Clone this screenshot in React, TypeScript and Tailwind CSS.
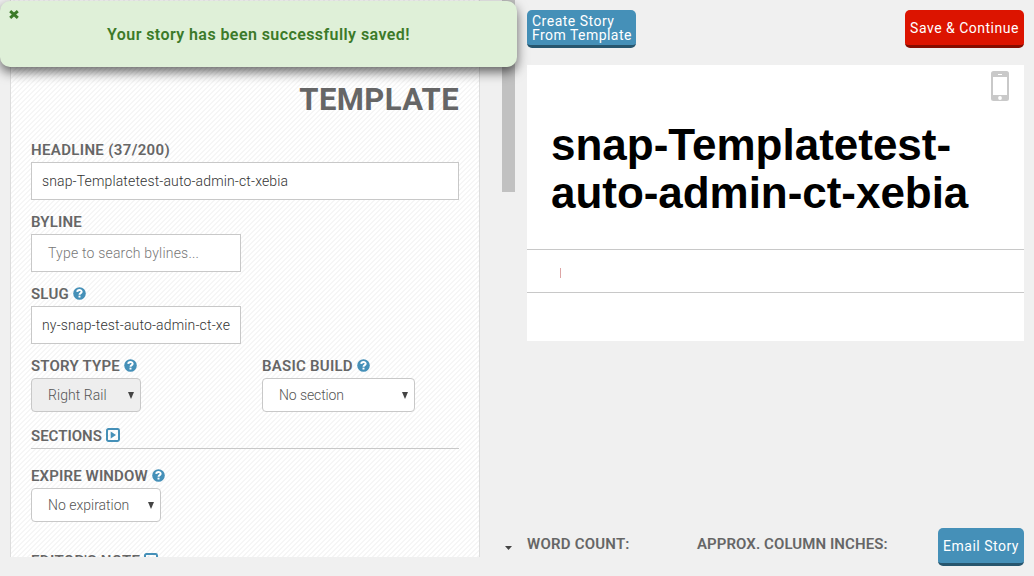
import React from 'react';

function Help() {
  return (
    <svg className="mb-px ml-1 h-[13px] w-[13px] shrink-0" viewBox="0 0 12 12">
      <circle cx="6" cy="6" r="5.8" fill="#4590b8" />
      <path d="M3.9 4.5C4.1 2.1 8 2.2 8 4.4C8 5.7 6 5.6 6 7.2" fill="none" stroke="#fff" strokeWidth="1.8" />
      <rect x="5.1" y="8" width="1.8" height="1.7" fill="#fff" />
    </svg>
  );
}

function SquareToggle() {
  return (
    <svg className="mb-[2px] ml-1 h-3.5 w-3.5 shrink-0" viewBox="0 0 14 14">
      <rect x="1" y="1" width="12" height="12" rx="1.4" fill="none" stroke="#4590b8" strokeWidth="2" />
      <path d="M4.7 3.5L10 7L4.7 10.5Z" fill="#4590b8" />
    </svg>
  );
}

function Label({ text, spacing, children }: { text: string; spacing: string; children?: React.ReactNode }) {
  return (
    <div className="flex h-5 items-center text-[15px] leading-5 font-semibold whitespace-nowrap text-[#666]">
      <span className={spacing}>{text}</span>
      {children}
    </div>
  );
}

function Select({ text, className, spacing }: { text: string; className: string; spacing: string }) {
  return (
    <div className={`flex h-[34px] items-center justify-between rounded border border-[#c8c8c8] pr-[6px] pl-4 text-sm font-light text-[#555] ${className}`}>
      <span className={spacing}>{text}</span>
      <svg className="h-[7px] w-[6px]" viewBox="0 0 6 7"><path d="M0 0H6L3 7Z" fill="#444" /></svg>
    </div>
  );
}

export default function App() {
  return (
    <div className="relative flex h-[576px] w-[1034px] overflow-hidden bg-[#f0f0f0] font-['Roboto',sans-serif]">
      <div className="ml-[10px] h-[557px] w-[470px] shrink-0 overflow-hidden border-x border-[#ddd] bg-white bg-[linear-gradient(135deg,#ffffff_25%,#f6f6f6_25%,#f6f6f6_50%,#ffffff_50%,#ffffff_75%,#f6f6f6_75%)] bg-size-[5px_5px] px-5 pt-[80px]">
        <h1 className="flex h-10 items-center justify-end text-[31px] font-bold tracking-[0.4px] text-[#666]">TEMPLATE</h1>
        <div className="mt-5">
          <Label text="HEADLINE (37/200)" spacing="tracking-[0.35px]" />
          <div className="mt-[2px] flex h-[38px] items-center border border-[#c8c8c8] bg-white px-[10px] text-sm font-light text-[#333]">
            <span className="tracking-[0.14px]">snap-Templatetest-auto-admin-ct-xebia</span>
          </div>
        </div>
        <div className="mt-3">
          <Label text="BYLINE" spacing="tracking-[0.2px]" />
          <div className="mt-[2px] flex h-[38px] w-[210px] items-center border border-[#c8c8c8] bg-white px-4 text-sm font-light text-[#777]">
            <span className="tracking-[0.2px]">Type to search bylines...</span>
          </div>
        </div>
        <div className="mt-3">
          <Label text="SLUG" spacing="tracking-[0.2px]"><Help /></Label>
          <div className="mt-[2px] flex h-[38px] w-[210px] items-center border border-[#c8c8c8] bg-white px-[10px] text-sm font-light whitespace-nowrap text-[#333]">
            <span className="tracking-[0.16px]">ny-snap-test-auto-admin-ct-xe</span>
          </div>
        </div>
        <div className="mt-3 flex">
          <div className="w-[231px]">
            <Label text="STORY TYPE" spacing="tracking-[0.2px]"><Help /></Label>
            <Select text="Right Rail" className="mt-[2px] w-[110px] bg-[#eee]" spacing="tracking-[0.05px]" />
          </div>
          <div>
            <Label text="BASIC BUILD" spacing="tracking-[0.25px]"><Help /></Label>
            <Select text="No section" className="mt-[2px] w-[153px] bg-white" spacing="tracking-[-0.1px]" />
          </div>
        </div>
        <div className="mt-[14px] border-b border-[#c8c8c8] pb-[2px]">
          <Label text="SECTIONS" spacing="tracking-[0px]"><SquareToggle /></Label>
        </div>
        <div className="mt-[17px]">
          <Label text="EXPIRE WINDOW" spacing="tracking-[0.14px]"><Help /></Label>
          <Select text="No expiration" className="mt-[2px] w-[130px] bg-white" spacing="tracking-[0px]" />
        </div>
        <div className="mt-[29px]">
          <Label text="EDITOR'S NOTE" spacing="tracking-[0.35px]"><SquareToggle /></Label>
        </div>
      </div>
      <div className="ml-[22px] flex w-[13px] shrink-0 flex-col justify-between">
        <div className="h-[192px] bg-[#c1c1c1]" />
        <svg className="mb-[26px] ml-[3px] h-1 w-[7px]" viewBox="0 0 7 4"><path d="M0 0H7L3.5 4Z" fill="#444" /></svg>
      </div>
      <div className="ml-3 flex w-[497px] shrink-0 flex-col">
        <div className="mt-[10px] flex justify-between text-sm leading-[14px] text-white">
          <button className="h-[38px] w-[109px] rounded-[5px] border-b-3 border-[#27566e] bg-[#4590b8] pl-[5px] text-left whitespace-nowrap">
            <span className="block tracking-[0.5px]">Create Story</span>
            <span className="block tracking-[0.46px]">From Template</span>
          </button>
          <button className="h-[38px] w-[119px] rounded-[5px] border-b-3 border-[#850c00] bg-[#dc1400] text-center whitespace-nowrap">
            <span className="tracking-[0.5px]">Save &amp; Continue</span>
          </button>
        </div>
        <div className="mt-[17px] h-[276px] bg-white">
          <div className="flex h-[56px] justify-end pt-[6px] pr-[15px]">
            <svg className="h-[30px] w-[18px]" viewBox="0 0 18 30">
              <rect width="18" height="30" rx="2.5" fill="#c9c9c9" />
              <path d="M2 6H16V24H2ZM7 3H11V4H7Z" fill="#fff" />
              <circle cx="9" cy="27" r="1.9" fill="#fff" />
            </svg>
          </div>
          <h2 className="h-[128px] pl-6 font-['Liberation_Sans',sans-serif] text-[44px] leading-[48px] font-bold whitespace-nowrap text-black">
            <span className="block">snap-Templatetest-</span>
            <span className="block tracking-[-0.04px]">auto-admin-ct-xebia</span>
          </h2>
          <div className="flex h-11 items-center border-y border-[#c8c8c8] pl-[33px]">
            <div className="mt-[4px] h-[10px] w-px bg-[#dda5a5]" />
          </div>
        </div>
        <div className="mt-[187px] flex h-[38px]">
          <div className="mt-[6px] flex w-[411px]">
            <div className="w-[170px]"><Label text="WORD COUNT:" spacing="tracking-[0.22px]" /></div>
            <Label text="APPROX. COLUMN INCHES:" spacing="tracking-[0.08px]" />
          </div>
          <button className="h-[38px] w-[86px] rounded-[5px] border-b-3 border-[#27566e] bg-[#4590b8] text-center text-sm whitespace-nowrap text-white">
            <span className="tracking-[0.5px]">Email Story</span>
          </button>
        </div>
      </div>
      <div role="alert" className="absolute top-px left-0 flex h-[66px] w-[517px] items-center justify-center rounded-[10px] bg-[#dff0d8] pt-px text-base font-semibold text-[#3c7a29] shadow-[0_5px_12px_rgba(0,0,0,0.6)]">
        <svg className="absolute top-[9px] left-[9px] h-[9px] w-[10px]" viewBox="0 0 10 9"><path d="M1.2 1.2L8.8 7.8M8.8 1.2L1.2 7.8" stroke="#3c7a29" strokeWidth="3" /></svg>
        <span className="tracking-[0.42px]">Your story has been successfully saved!</span>
      </div>
    </div>
  );
}
